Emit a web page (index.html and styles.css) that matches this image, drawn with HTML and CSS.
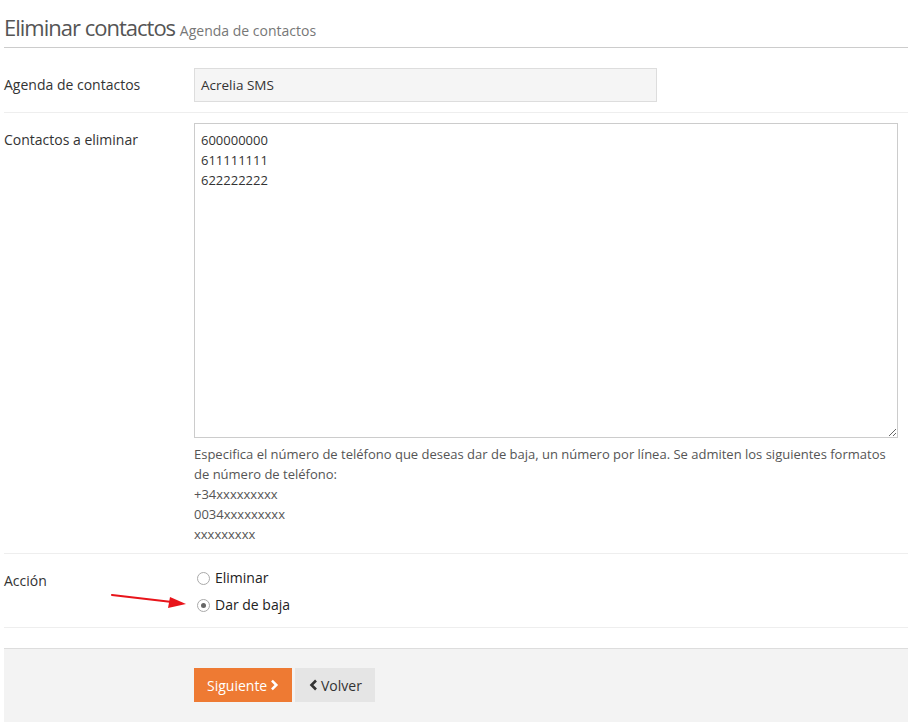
FILE: index.html
```html
<!DOCTYPE html>
<html lang="es">
<head>
<meta charset="utf-8">
<title>Eliminar contactos</title>
<link rel="stylesheet" href="styles.css">
</head>
<body>
<div class="page">
  <div class="page-header">
    <h1 class="title">Eliminar contactos <small class="subtitle">Agenda de contactos</small></h1>
  </div>
  <form class="form">
    <div class="row row-agenda">
      <div class="label">Agenda de contactos</div>
      <div class="field">
        <div class="static-input">Acrelia SMS</div>
      </div>
    </div>
    <div class="row row-contacts">
      <div class="label">Contactos a eliminar</div>
      <div class="field field-wide">
        <textarea class="textarea">600000000
611111111
622222222</textarea>
        <p class="help">Especifica el número de teléfono que deseas dar de baja, un número por línea. Se admiten los siguientes formatos de número de teléfono:<br>+34xxxxxxxxx<br>0034xxxxxxxxx<br>xxxxxxxxx</p>
      </div>
    </div>
    <div class="row row-action">
      <div class="label">Acción</div>
      <div class="field radios">
        <label class="radio"><input type="radio" name="accion"> <span>Eliminar</span></label>
        <label class="radio"><input type="radio" name="accion" checked> <span>Dar de baja</span></label>
        <svg class="arrow" width="80" height="20" viewBox="0 0 80 20">
          <line x1="2" y1="5" x2="62" y2="12" stroke="#e8141a" stroke-width="2.2" stroke-linecap="round"/>
          <polygon points="76,14 60,7 58,18" fill="#e8141a"/>
        </svg>
      </div>
    </div>
    <div class="actions">
      <button type="button" class="btn btn-primary">Siguiente <svg class="chev" width="9" height="12" viewBox="0 0 9 12"><path d="M2 1.5 L6.5 6 L2 10.5" fill="none" stroke="#fff" stroke-width="2.6"/></svg></button>
      <button type="button" class="btn btn-default"><svg class="chev" width="9" height="12" viewBox="0 0 9 12"><path d="M7 1.5 L2.5 6 L7 10.5" fill="none" stroke="#333" stroke-width="2.6"/></svg> Volver</button>
    </div>
  </form>
</div>
</body>
</html>
```
FILE: styles.css
```css
* { box-sizing: border-box; }
html, body { margin: 0; padding: 0; background: #fff; }
body {
  font-family: "Open Sans", "Liberation Sans", sans-serif;
  font-size: 14px;
  color: #333;
}
.page { padding: 0 5px 0 4px; }
.page-header {
  height: 48px;
  border-bottom: 1px solid #ccc;
  display: flex;
  align-items: flex-end;
}
.title {
  margin: 0 0 3px 0;
  font-size: 22px;
  font-weight: 400;
  color: #555;
  letter-spacing: -1px;
  line-height: 26px;
}
.subtitle {
  font-size: 14px;
  color: #777;
  letter-spacing: 0;
}
.row {
  display: flex;
  border-bottom: 1px solid #eee;
}
.label {
  width: 190px;
  flex: none;
  line-height: 20px;
  font-size: 14px;
  color: #333;
}
.row-agenda { padding: 20px 0 10px; }
.row-agenda .label { padding-top: 7px; }
.static-input {
  width: 463px;
  height: 34px;
  background: #f5f5f5;
  border: 1px solid #ddd;
  padding: 7px 6px;
  line-height: 18px;
  font-size: 13.5px;
}
.row-contacts { padding: 10px 0 9px; }
.row-contacts .label { padding-top: 7px; }
.field-wide { flex: 1; padding-right: 10px; }
.textarea {
  display: block;
  width: 100%;
  height: 315px;
  border: 1px solid #ccc;
  border-radius: 0;
  padding: 6px 6px;
  font-family: "Open Sans", "Liberation Sans", sans-serif;
  font-size: 13px;
  line-height: 20px;
  color: #333;
  resize: both;
  margin: 0;
}
.help {
  margin: 6px 0 0;
  font-size: 13px;
  line-height: 20px;
  color: #555;
}
.row-action { padding: 14px 0 12px; }
.row-action .label { padding-top: 3px; }
.radios {
  position: relative;
  display: flex;
  flex-direction: column;
  gap: 7px;
}
.radio {
  display: flex;
  align-items: center;
  gap: 5px;
  font-size: 14px;
  line-height: 20px;
  color: #222;
}
.radio input {
  appearance: none;
  -webkit-appearance: none;
  margin: 0 0 0 3px;
  width: 13px;
  height: 13px;
  border: 1px solid #aaa;
  border-radius: 50%;
  background: #fff;
  position: relative;
}
.radio input:checked::after {
  content: "";
  position: absolute;
  left: 3px;
  top: 3px;
  width: 5px;
  height: 5px;
  border-radius: 50%;
  background: #666;
}
.arrow {
  position: absolute;
  left: -84px;
  top: 22px;
}
.actions {
  margin-top: 20px;
  border-top: 1px solid #ddd;
  background: #f3f3f3;
  padding: 19px 0 20px 190px;
  display: flex;
  gap: 3px;
}
.btn {
  height: 34px;
  border: none;
  border-radius: 0;
  font-family: "Open Sans", "Liberation Sans", sans-serif;
  font-size: 14px;
  padding: 0 13px;
  display: inline-flex;
  align-items: center;
  gap: 3px;
  cursor: pointer;
}
.btn-primary { background: #ee7a33; color: #fff; width: 98px; }
.btn-default { background: #e5e5e5; color: #333; width: 80px; padding-left: 14px; }
.chev { display: block; }
```
